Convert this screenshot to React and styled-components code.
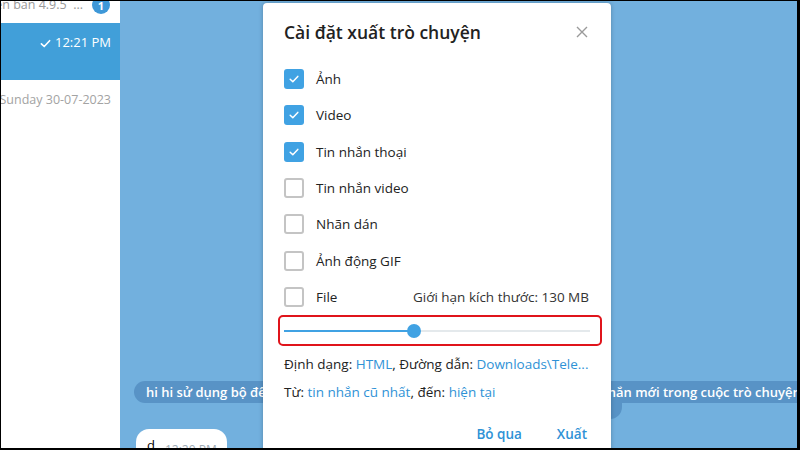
import styled, { createGlobalStyle } from "styled-components";

const GlobalStyle = createGlobalStyle`
  html, body {
    margin: 0;
    padding: 0;
    background: #000;
  }
  body {
    font-family: "Open Sans", "Noto Sans", sans-serif;
  }
`;

const Frame = styled.div`
  position: relative;
  width: 800px;
  height: 450px;
  box-sizing: border-box;
  border-style: solid;
  border-color: #000;
  border-width: 1px 3px 2px 1px;
  display: flex;
  overflow: hidden;
`;

const Sidebar = styled.aside`
  width: 119px;
  flex-shrink: 0;
  background: #fff;
  display: flex;
  flex-direction: column;
  overflow: hidden;
`;

const TopRow = styled.div`
  height: 22px;
  display: flex;
  justify-content: flex-end;
  align-items: flex-start;
  gap: 9px;
  padding-right: 10px;
  overflow: hidden;
  .preview {
    margin-top: -6px;
    font-size: 12.5px;
    line-height: 20px;
    color: #999;
    white-space: nowrap;
  }
`;

const Badge = styled.span`
  flex-shrink: 0;
  margin-top: -5px;
  width: 18px;
  height: 18px;
  border-radius: 50%;
  background: #3e98d8;
  color: #fff;
  font-size: 11px;
  font-weight: 700;
  display: flex;
  align-items: center;
  justify-content: center;
`;

const SelectedRow = styled.div`
  height: 57px;
  background: #419fd9;
  display: flex;
  justify-content: flex-end;
  align-items: flex-start;
  padding: 9px 9px 0 0;
  box-sizing: border-box;
  color: #fff;
  font-size: 13px;
  line-height: 20px;
  gap: 3px;
  svg {
    margin-top: 5px;
  }
`;

const DateRow = styled.div`
  display: flex;
  justify-content: flex-end;
  padding: 10px 9px 0 0;
  font-size: 12.5px;
  line-height: 20px;
  color: #a3a3a3;
  white-space: nowrap;
`;

const Chat = styled.main`
  flex: 1;
  background: #72b0de;
  display: flex;
  flex-direction: column;
  padding-top: 380px;
  overflow: hidden;
  & > * {
    flex-shrink: 0;
  }
`;

const ServiceLine = styled.div`
  margin-left: 14px;
  height: 22px;
  width: max-content;
  padding: 0 12px;
  background: #5893c6;
  border-radius: 11px 0 0 11px;
  color: #fff;
  font-size: 13px;
  font-weight: 600;
  line-height: 22px;
  white-space: nowrap;
`;

const ServiceTail = styled.div`
  margin-left: 200px;
  width: 302px;
  height: 16px;
  background: #5893c6;
  border-radius: 0 0 12px 12px;
`;

const Bubble = styled.div`
  margin: 10px 0 0 16px;
  width: 91px;
  height: 40px;
  background: #fff;
  border-radius: 13px;
  display: flex;
  align-items: flex-start;
  gap: 10px;
  padding: 7px 0 0 11px;
  box-sizing: border-box;
  font-size: 13px;
  line-height: 18px;
  .msg {
    color: #000;
  }
  .time {
    margin-top: 5px;
    font-size: 12px;
    color: #a0acb6;
  }
`;

const Modal = styled.section`
  position: absolute;
  left: 262px;
  top: 2px;
  width: 348px;
  height: 470px;
  background: #fff;
  border-radius: 4px;
  box-shadow: 0 0 4px rgba(0, 0, 0, 0.25);
  padding: 17px 22px 0 21px;
  box-sizing: border-box;
  color: #222;
`;

const Header = styled.header`
  display: flex;
  align-items: center;
  justify-content: space-between;
  height: 24px;
  h1 {
    margin: 0;
    font-size: 17.5px;
    font-weight: 600;
    color: #222;
  }
  svg {
    margin-right: 1px;
  }
`;

const OptionList = styled.div`
  margin-top: 17px;
  display: flex;
  flex-direction: column;
`;

const Option = styled.label`
  height: 36.33px;
  display: flex;
  align-items: center;
  gap: 12px;
  font-size: 13.5px;
  color: #222;
  .extra {
    margin-left: auto;
    color: #333;
  }
`;

const Box = styled.span`
  width: 20px;
  height: 20px;
  box-sizing: border-box;
  border-radius: 3px;
  flex-shrink: 0;
  display: flex;
  align-items: center;
  justify-content: center;
  background: ${(p) => (p.checked ? "#40a2e3" : "#fff")};
  border: ${(p) => (p.checked ? "none" : "2px solid #c4c4c4")};
`;

const Highlight = styled.div`
  margin: 0 -13px 0 -6px;
  height: 31px;
  border: 2.5px solid #e0141b;
  border-radius: 5px;
  box-sizing: border-box;
  display: flex;
  align-items: center;
  padding: 0 10.5px 0 3.5px;
`;

const Track = styled.div`
  position: relative;
  flex: 1;
  height: 2px;
  background: #e4e9ec;
  margin-top: 1px;
`;

const Fill = styled.div`
  height: 100%;
  background: #40a2e3;
`;

const Thumb = styled.div`
  position: absolute;
  top: 50%;
  width: 14px;
  height: 14px;
  border-radius: 50%;
  background: #40a2e3;
  transform: translate(-50%, -50%);
`;

const InfoLine = styled.p`
  margin: ${(p) => p.$top}px 0 0;
  font-size: 13.5px;
  line-height: 20px;
  color: #222;
  white-space: nowrap;
  a {
    color: #2f92d6;
    text-decoration: none;
  }
`;

const Actions = styled.div`
  margin-top: 23px;
  display: flex;
  justify-content: flex-end;
  gap: 35px;
  padding-right: 2px;
`;

const TextButton = styled.button`
  border: none;
  background: none;
  padding: 0;
  font-family: inherit;
  font-size: 13.5px;
  font-weight: 600;
  color: #2f92d6;
`;

const Check = ({ color = "#fff", size = 12 }) => (
  <svg width={size} height={size} viewBox="0 0 12 12" fill="none">
    <path d="M2.2 6.3 4.8 8.8 9.8 3.4" stroke={color} strokeWidth="1.5" strokeLinecap="round" strokeLinejoin="round" />
  </svg>
);

const options = [
  { label: "Ảnh", checked: true },
  { label: "Video", checked: true },
  { label: "Tin nhắn thoại", checked: true },
  { label: "Tin nhắn video", checked: false },
  { label: "Nhãn dán", checked: false },
  { label: "Ảnh động GIF", checked: false },
  { label: "File", checked: false, extra: "Giới hạn kích thước: 130 MB" },
];

const sizeLimit = 0.425;

export default function App() {
  return (
    <>
      <GlobalStyle />
      <Frame>
        <Sidebar>
          <TopRow>
            <span className="preview">Phiên bản 4.9.5 &nbsp;...</span>
            <Badge>1</Badge>
          </TopRow>
          <SelectedRow>
            <Check size={13} />
            <span>12:21 PM</span>
          </SelectedRow>
          <DateRow>Sunday 30-07-2023</DateRow>
        </Sidebar>
        <Chat>
          <ServiceLine>
            hi hi sử dụng bộ đếm tin nhắn để xem số lượng tin nhắn đã gửi và số tin nhắn mới trong cuộc trò chuyện này
          </ServiceLine>
          <ServiceTail />
          <Bubble>
            <span className="msg">d</span>
            <span className="time">12:20 PM</span>
          </Bubble>
        </Chat>
        <Modal>
          <Header>
            <h1>Cài đặt xuất trò chuyện</h1>
            <svg width="12" height="12" viewBox="0 0 12 12">
              <path d="M1 1 11 11M11 1 1 11" stroke="#9a9a9a" strokeWidth="1.4" />
            </svg>
          </Header>
          <OptionList>
            {options.map((o) => (
              <Option key={o.label}>
                <Box checked={o.checked}>{o.checked && <Check />}</Box>
                <span>{o.label}</span>
                {o.extra && <span className="extra">{o.extra}</span>}
              </Option>
            ))}
          </OptionList>
          <Highlight>
            <Track>
              <Fill style={{ width: `${sizeLimit * 100}%` }} />
              <Thumb style={{ left: `${sizeLimit * 100}%` }} />
            </Track>
          </Highlight>
          <InfoLine $top={8}>
            Định dạng: <a>HTML</a>, Đường dẫn: <a>Downloads\Tele...</a>
          </InfoLine>
          <InfoLine $top={8}>
            Từ: <a>tin nhắn cũ nhất</a>, đến: <a>hiện tại</a>
          </InfoLine>
          <Actions>
            <TextButton>Bỏ qua</TextButton>
            <TextButton>Xuất</TextButton>
          </Actions>
        </Modal>
      </Frame>
    </>
  );
}
